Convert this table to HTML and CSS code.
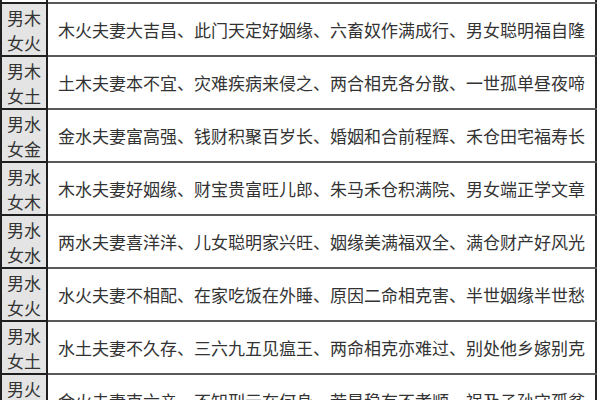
FILE: index.html
```html
<!DOCTYPE html>
<html lang="zh">
<head>
<meta charset="utf-8">
<link rel="stylesheet" href="styles.css">
</head>
<body>
<table class="tbl">
  <tr class="stub"><td class="k"></td><td class="v"></td></tr>
  <tr><td class="k">男木<br>女火</td><td class="v">木火夫妻大吉昌、此门天定好姻缘、六畜奴作满成行、男女聪明福自隆</td></tr>
  <tr><td class="k">男木<br>女土</td><td class="v">土木夫妻本不宜、灾难疾病来侵之、两合相克各分散、一世孤单昼夜啼</td></tr>
  <tr><td class="k">男水<br>女金</td><td class="v">金水夫妻富高强、钱财积聚百岁长、婚姻和合前程辉、禾仓田宅福寿长</td></tr>
  <tr><td class="k">男水<br>女木</td><td class="v">木水夫妻好姻缘、财宝贵富旺儿郎、朱马禾仓积满院、男女端正学文章</td></tr>
  <tr><td class="k">男水<br>女水</td><td class="v">两水夫妻喜洋洋、儿女聪明家兴旺、姻缘美满福双全、满仓财产好风光</td></tr>
  <tr><td class="k">男水<br>女火</td><td class="v">水火夫妻不相配、在家吃饭在外睡、原因二命相克害、半世姻缘半世愁</td></tr>
  <tr><td class="k">男水<br>女土</td><td class="v">水土夫妻不久存、三六九五见瘟王、两命相克亦难过、别处他乡嫁别克</td></tr>
  <tr><td class="k">男火<br>女金</td><td class="v">金火夫妻克六亲、不知刑元在何身、若是稳有不孝顺、祸及子孙守孤贫</td></tr>
</table>
</body>
</html>
```
FILE: styles.css
```css
html, body {
  margin: 0;
  padding: 0;
  background: #ffffff;
  overflow: hidden;
}
.tbl {
  border-collapse: collapse;
  width: 597px;
  font-family: "Noto Sans CJK SC", "Noto Sans", sans-serif;
  color: #333333;
  table-layout: fixed;
}
.tbl td {
  padding: 0;
  height: 50px;
}
.tbl .k {
  width: 44px;
  background: #e4e4e4;
  border: 2px solid #1f1f1f;
  border-left-width: 2px;
  font-size: 17px;
  line-height: 25px;
  text-align: center;
}
.tbl .v {
  border: 2px solid #5a5a5a;
  border-right-color: #262626;
  font-size: 17px;
  line-height: 24px;
  text-align: center;
  padding-top: 1px;
}
.tbl .stub td {
  height: 1px;
  background: #ffffff;
  border-top: 0;
}
```
